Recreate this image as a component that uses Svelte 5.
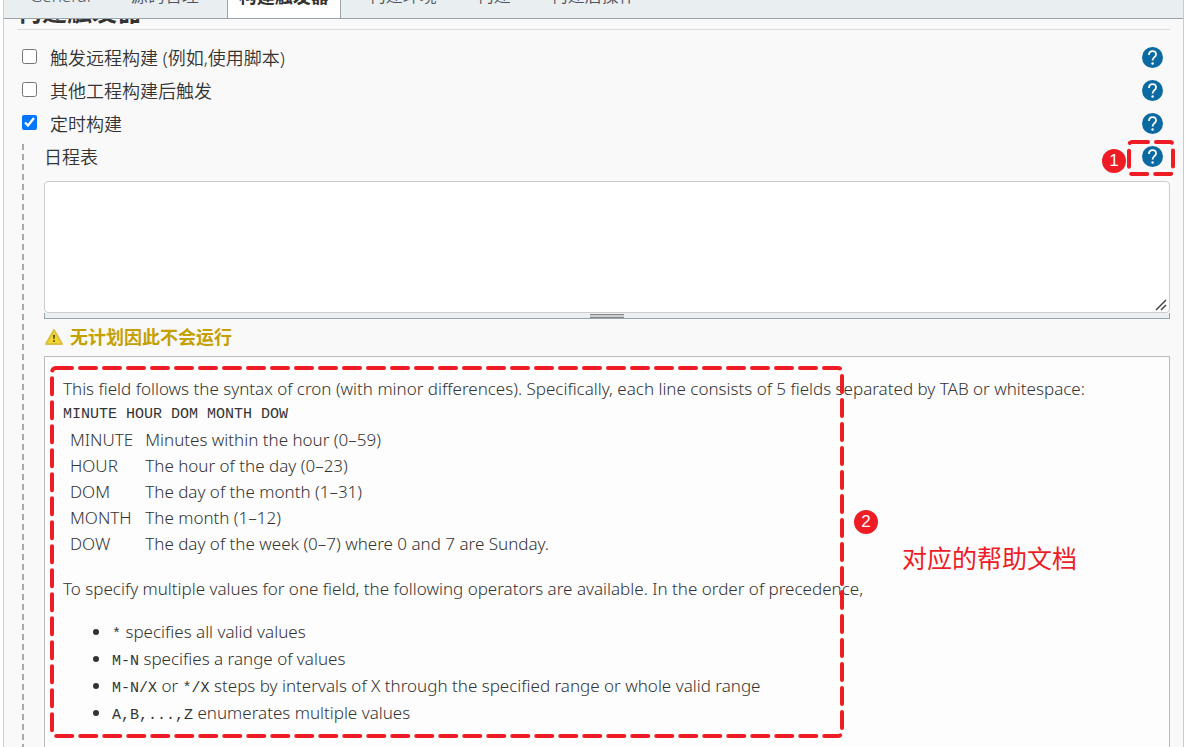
<script>
    // Вкладки
    let tabs = ['General', '源码管理', '构建触发器', '构建环境', '构建', '构建后操作'];
    let current = '构建触发器';

    let triggers = [
        { id: 'remote', label: '触发远程构建 (例如,使用脚本)', checked: false },
        { id: 'upstream', label: '其他工程构建后触发', checked: false },
        { id: 'timer', label: '定时构建', checked: true }
    ];

    let schedule = '';

    // Поля cron
    let fields = [
        ['MINUTE', 'Minutes within the hour (0–59)'],
        ['HOUR', 'The hour of the day (0–23)'],
        ['DOM', 'The day of the month (1–31)'],
        ['MONTH', 'The month (1–12)'],
        ['DOW', 'The day of the week (0–7) where 0 and 7 are Sunday.']
    ];
</script>

{#snippet helpIcon()}
    <svg width="21" height="21" viewBox="0 0 22 22" aria-hidden="true">
        <circle cx="11" cy="11" r="11" fill="#0b6aa2" />
        <path d="M7.3 8.3C7.3 5.7 8.8 4.3 11 4.3s3.700 1.400 3.700 3.500c0 2.700-3.600 3.100-3.600 6.300" fill="none" stroke="#fff" stroke-width="1.900" />
        <circle cx="11.1" cy="17.2" r="1.300" fill="#fff" />
    </svg>
{/snippet}

<div class="page">
    <nav class="tabs">
        {#each tabs as tab}
            <a href="#{tab}" class="tab" class:active={tab === current}>{tab}</a>
        {/each}
    </nav>

    <main>
        <h2>构建触发器</h2>

        {#each triggers as trigger}
            <div class="row">
                <input type="checkbox" id={trigger.id} bind:checked={trigger.checked} />
                <label for={trigger.id}>{trigger.label}</label>
                <button class="help" aria-label="帮助">{@render helpIcon()}</button>
            </div>
        {/each}

        <div class="nested">
            <div class="row">
                <label for="schedule">日程表</label>
                <button class="help" aria-label="帮助">
                    {@render helpIcon()}
                    <span class="badge one">1</span>
                    <svg class="small-frame" width="50" height="38" viewBox="0 0 50 38" aria-hidden="true">
                        <rect x="3" y="3" width="44" height="32" rx="3" />
                    </svg>
                </button>
            </div>

            <div class="editor">
                <textarea id="schedule" bind:value={schedule}></textarea>
                <svg class="grip" width="12" height="12" viewBox="0 0 12 12" aria-hidden="true">
                    <path d="M1 11 11 1M6 11l5-5" stroke="#444" stroke-width="1.500" />
                </svg>
            </div>
            <div class="handle"><span></span></div>

            <div class="warning">
                <svg width="20" height="20" viewBox="0 0 20 20" aria-hidden="true">
                    <path d="M10 4 18 18H2Z" fill="#f5d925" stroke="#dcc044" stroke-width="2" stroke-linejoin="round" />
                    <path d="M9 9h2l-.4 4H9.400z" fill="#4a4213" />
                    <circle cx="10" cy="15" r="1" fill="#4a4213" />
                </svg>
                无计划因此不会运行
            </div>

            <div class="doc">
                <p>This field follows the syntax of cron (with minor differences). Specifically, each line consists of 5 fields separated by TAB or whitespace:</p>
                <pre>MINUTE HOUR DOM MONTH DOW</pre>
                <table>
                    <tbody>
                        {#each fields as [name, text]}
                            <tr><td>{name}</td><td>{text}</td></tr>
                        {/each}
                    </tbody>
                </table>
                <p class="operators">To specify multiple values for one field, the following operators are available. In the order of precedence,</p>
                <ul>
                    <li><code>*</code> specifies all valid values</li>
                    <li><code>M-N</code> specifies a range of values</li>
                    <li><code>M-N/X</code> or <code>*/X</code> steps by intervals of X through the specified range or whole valid range</li>
                    <li><code>A,B,...,Z</code> enumerates multiple values</li>
                </ul>

                <svg class="big-frame" width="798" height="374" viewBox="0 0 798 374" aria-hidden="true">
                    <rect x="4" y="3" width="790" height="368" rx="4" />
                </svg>
                <span class="badge two">2</span>
                <span class="note">对应的帮助文档</span>
            </div>
        </div>
    </main>
</div>

<style>
    :global(body) {
        background: #fff;
        overflow: hidden;
    }

    .page {
        box-sizing: border-box;
        display: flex;
        flex-direction: column;
        min-height: 100vh;
        margin: 0 4px 0 3px;
        border: 1px solid #ccc;
        border-width: 0 1px;
        background: #f9f9f9;
        color: #333;
        font-family: "Noto Sans", "Noto Sans CJK SC", sans-serif;
        font-size: 17px;
        font-weight: 350;
    }

    .tabs {
        display: flex;
        align-items: flex-end;
        gap: 16px;
        height: 18px;
        padding-left: 14px;
        overflow: hidden;
        background: #e9eef1;
        border-bottom: 1px solid #98a4ab;
    }

    .tab {
        padding: 0 11px 10px;
        border: 1px solid transparent;
        border-width: 0 1px;
        color: #4d545d;
        font-size: 17px;
        line-height: 24px;
        text-decoration: none;
        white-space: nowrap;
    }

    .tab.active {
        background: #fff;
        border-color: #98a4ab;
        color: #333;
        font-size: 18px;
        font-weight: bold;
    }

    main {
        display: flex;
        flex-direction: column;
        flex: 1;
        padding: 0 13px;
    }

    h2 {
        display: flex;
        align-items: flex-end;
        height: 10px;
        margin: 0 0 10px;
        padding: 0;
        overflow: hidden;
        border-bottom: 1px solid #ddd;
        font-size: 25px;
        line-height: 36px;
    }

    .row {
        display: flex;
        align-items: center;
        height: 33px;
        padding: 0 7px 0 5px;
        font-size: 18px;
    }

    .row input {
        width: 15px;
        height: 15px;
        margin: 0 13px 0 0;
    }

    .help {
        position: relative;
        display: flex;
        margin: 2px 0 0 auto;
        padding: 0;
        border: 0;
        background: none;
    }

    .nested {
        display: flex;
        flex-direction: column;
        flex: 1;
        padding-left: 27px;
        background: repeating-linear-gradient(#f9f9f9 0 4px, #aaa 4px 10px) 5px 1px / 2px 100% no-repeat;
    }

    .nested .row {
        padding-left: 0;
    }

    .editor {
        position: relative;
        display: flex;
        margin-top: 9px;
    }

    textarea {
        box-sizing: border-box;
        width: 100%;
        height: 132px;
        border: 1px solid #ccc;
        border-radius: 4px;
        background: #fff;
        font: 15px "Liberation Mono", monospace;
        resize: none;
    }

    .grip {
        position: absolute;
        right: 3px;
        bottom: 2px;
        pointer-events: none;
    }

    .handle {
        display: flex;
        justify-content: center;
        height: 5px;
        border: 1px solid #98a4ab;
        border-top: 0;
        background: #eaeff2;
    }

    .handle span {
        box-sizing: border-box;
        width: 34px;
        height: 4px;
        margin-top: 1px;
        border: 1px solid #888;
        border-width: 1px 0;
        background: #ccc;
    }

    .warning {
        display: flex;
        align-items: center;
        gap: 6px;
        height: 33px;
        padding-bottom: 4px;
        color: #c4a000;
        font-size: 18px;
        font-weight: bold;
    }

    .doc {
        position: relative;
        flex: 1;
        padding: 18px;
        border: 1px solid #bbb;
        border-bottom: 0;
        background: #fdfdfd;
        line-height: 27px;
    }

    .doc p {
        margin: 0;
        white-space: nowrap;
    }

    pre,
    code {
        margin: 0;
        font-family: "Liberation Mono", monospace;
        font-size: 15px;
    }

    pre {
        line-height: 25px;
    }

    code {
        line-height: 15px;
    }

    table {
        margin-left: 7px;
        border-spacing: 0;
        line-height: 26px;
    }

    td {
        padding: 0 12px 0 0;
    }

    .doc .operators {
        margin-top: 18px;
    }

    ul {
        margin: 16px 0;
        padding-left: 49px;
    }

    .badge {
        position: absolute;
        width: 24px;
        height: 24px;
        border-radius: 50%;
        background: #ee1c25;
        color: #fff;
        font: 17px/24px "Liberation Sans", sans-serif;
        text-align: center;
    }

    .badge.one {
        top: 3px;
        right: 37px;
    }

    .badge.two {
        top: 153px;
        left: 809px;
    }

    .small-frame,
    .big-frame {
        position: absolute;
        fill: none;
        stroke: #ee1c25;
        stroke-width: 4;
        stroke-linecap: round;
        stroke-dasharray: 16 8;
        pointer-events: none;
    }

    .small-frame {
        top: -7px;
        left: -16px;
    }

    .big-frame {
        top: 8px;
        left: 3px;
    }

    .note {
        position: absolute;
        top: 182px;
        left: 857px;
        color: #ee1c25;
        font-size: 25px;
        font-weight: 400;
        line-height: 38px;
        white-space: nowrap;
    }
</style>
